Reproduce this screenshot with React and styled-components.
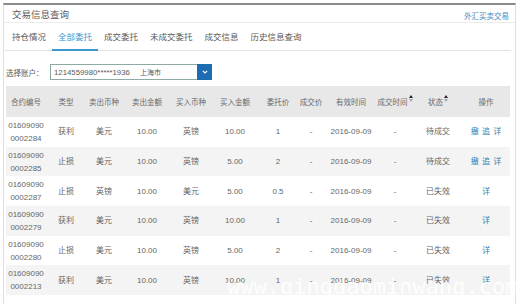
import styled, { createGlobalStyle } from 'styled-components';

const GlobalStyle = createGlobalStyle`
  html, body {
    margin: 0;
    padding: 0;
    background: #fff;
  }
  body {
    font-family: 'Liberation Sans', 'Noto Sans CJK SC', sans-serif;
    color: #555;
  }
`;

const Page = styled.div`
  position: relative;
  width: 518px;
  height: 304px;
  overflow: hidden;
  padding-top: 3px;
  box-sizing: border-box;
`;

const Panel = styled.div`
  margin-left: 3px;
  width: 513px;
  box-sizing: border-box;
  border-top: 2px solid #8a8a8a;
  border-left: 1px solid #dedede;
  border-right: 1px solid #dedede;
  height: 301px;
`;

const TitleBar = styled.div`
  display: flex;
  align-items: center;
  justify-content: space-between;
  height: 17px;
  padding: 0 6px 0 8px;
  border-bottom: 1px solid #ececec;
`;

const Title = styled.span`
  font-size: 9.5px;
  color: #5a5a5a;
`;

const TopLink = styled.a`
  font-size: 7.5px;
  color: #3a8cc4;
  text-decoration: none;
  margin-top: 3px;
`;

const Tabs = styled.div`
  display: flex;
  height: 27px;
  margin: 0 4px 0 1px;
  border-bottom: 1px solid #e2e2e2;
`;

const Tab = styled.div`
  display: flex;
  align-items: center;
  padding: 0 6px;
  margin-bottom: -1px;
  font-size: 8.5px;
  color: ${p => (p.$active ? '#3f97cf' : '#5a5a5a')};
  border-bottom: 2px solid ${p => (p.$active ? '#3f97cf' : 'transparent')};
  &:first-child {
    padding-left: 7px;
  }
`;

const FilterRow = styled.div`
  display: flex;
  align-items: center;
  padding: 13px 0 6px 2px;
`;

const Label = styled.span`
  font-size: 7.5px;
  color: #5a5a5a;
  width: 44px;
`;

const Select = styled.div`
  display: flex;
  height: 16px;
  width: 162px;
  box-sizing: border-box;
  border: 1px solid #8fa9a4;
`;

const SelectText = styled.div`
  flex: 1;
  display: flex;
  align-items: center;
  padding-left: 3px;
  font-size: 7.8px;
  color: #5a5a5a;
  gap: 10px;
`;

const City = styled.span`
  font-size: 7px;
`;

const DropButton = styled.div`
  width: 15px;
  background: #1c6db3;
  display: flex;
  align-items: center;
  justify-content: center;
  margin: -1px -1px -1px 0;
`;

const Table = styled.table`
  margin-left: 2px;
  width: 504px;
  border-collapse: collapse;
  table-layout: fixed;
`;

const HeadCell = styled.th`
  height: 31px;
  padding: 0;
  background: #e8e8e8;
  font-weight: normal;
  font-size: 7.5px;
  color: #6a6a6a;
  text-align: center;
  white-space: nowrap;
`;

const Row = styled.tr`
  background: ${p => (p.$shaded ? '#f4f4f4' : '#fff')};
`;

const Cell = styled.td`
  height: 29.7px;
  padding: 0;
  font-size: 8px;
  line-height: 13px;
  color: #666;
  text-align: center;
  white-space: nowrap;
`;

const Ops = styled.span`
  color: #2f80b2;
  word-spacing: 1px;
`;

const SortIcon = styled.span`
  display: inline-flex;
  flex-direction: column;
  gap: 1px;
  vertical-align: top;
  margin-left: 1px;
  margin-top: -1px;
  &::before, &::after {
    content: '';
    border-left: 2px solid transparent;
    border-right: 2px solid transparent;
  }
  &::before {
    border-bottom: 3px solid #222;
  }
  &::after {
    border-top: 3px solid #aaa;
  }
`;

const Watermark = styled.div`
  position: absolute;
  left: 227px;
  top: 276px;
  font-family: 'DejaVu Sans Mono', monospace;
  font-size: 22px;
  line-height: 22px;
  color: rgba(255, 255, 255, 0.92);
  white-space: nowrap;
  pointer-events: none;
`;

const columns = [
  { title: '合约编号', width: 40 },
  { title: '类型', width: 40 },
  { title: '卖出币种', width: 36 },
  { title: '卖出金额', width: 50 },
  { title: '买入币种', width: 38 },
  { title: '买入金额', width: 50 },
  { title: '委托价', width: 36 },
  { title: '成交价', width: 30 },
  { title: '有效时间', width: 50 },
  { title: '成交时间', width: 38, sort: true },
  { title: '状态', width: 48, sort: true },
  { title: '操作', width: 48 },
];

const rows = [
  ['0002284', '获利', '美元', '10.00', '英镑', '10.00', '1', '待成交', true],
  ['0002285', '止损', '美元', '10.00', '英镑', '5.00', '2', '待成交', true],
  ['0002287', '止损', '英镑', '10.00', '美元', '5.00', '0.5', '已失效', false],
  ['0002279', '获利', '美元', '10.00', '英镑', '10.00', '1', '已失效', false],
  ['0002280', '止损', '美元', '10.00', '英镑', '5.00', '2', '已失效', false],
  ['0002213', '获利', '美元', '10.00', '英镑', '10.00', '1', '已失效', false],
];

const tabs = ['持仓情况', '全部委托', '成交委托', '未成交委托', '成交信息', '历史信息查询'];

export default function App() {
  return (
    <Page>
      <GlobalStyle />
      <Panel>
        <TitleBar>
          <Title>交易信息查询</Title>
          <TopLink>外汇买卖交易</TopLink>
        </TitleBar>
        <Tabs>
          {tabs.map((t, i) => (
            <Tab key={t} $active={i === 1}>{t}</Tab>
          ))}
        </Tabs>
        <FilterRow>
          <Label>选择账户：</Label>
          <Select>
            <SelectText>
              <span>1214559980*****1936</span>
              <City>上海市</City>
            </SelectText>
            <DropButton>
              <svg width="6" height="4" viewBox="0 0 6 4">
                <path d="M0.8 0.8 L3 3 L5.2 0.8" stroke="#fff" strokeWidth="1.1" fill="none" />
              </svg>
            </DropButton>
          </Select>
        </FilterRow>
        <Table>
          <colgroup>
            {columns.map(c => (
              <col key={c.title} style={{ width: c.width }} />
            ))}
          </colgroup>
          <thead>
            <tr>
              {columns.map(c => (
                <HeadCell key={c.title}>
                  {c.title}
                  {c.sort && <SortIcon />}
                </HeadCell>
              ))}
            </tr>
          </thead>
          <tbody>
            {rows.map((r, i) => (
              <Row key={r[0]} $shaded={i % 2 === 1}>
                <Cell>01609090<br />{r[0]}</Cell>
                <Cell>{r[1]}</Cell>
                <Cell>{r[2]}</Cell>
                <Cell>{r[3]}</Cell>
                <Cell>{r[4]}</Cell>
                <Cell>{r[5]}</Cell>
                <Cell>{r[6]}</Cell>
                <Cell>-</Cell>
                <Cell>2016-09-09</Cell>
                <Cell>-</Cell>
                <Cell>{r[7]}</Cell>
                <Cell><Ops>{r[8] ? '撤 追 详' : '详'}</Ops></Cell>
              </Row>
            ))}
          </tbody>
        </Table>
      </Panel>
      <Watermark>www.qingdaominwang.com</Watermark>
    </Page>
  );
}
